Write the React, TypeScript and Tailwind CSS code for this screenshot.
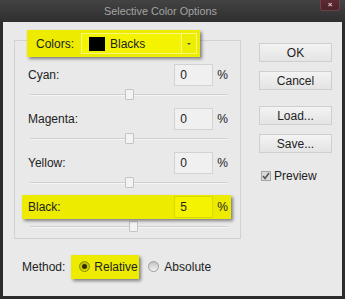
import React from "react";

const F = { fontFamily: '"Liberation Sans", Arial, sans-serif' };

type Row = { label: string; value: number; hi?: boolean };
const rows: Row[] = [
  { label: "Cyan:", value: 0 },
  { label: "Magenta:", value: 0 },
  { label: "Yellow:", value: 0 },
  { label: "Black:", value: 5, hi: true },
];

function Slider({ value }: { value: number }) {
  const w = 197;
  const left = Math.round(((value + 100) / 200) * w) - 4;
  return (
    <div className="relative ml-[8px] w-[197px] h-[20px]">
      <div className="absolute left-0 right-0 top-[7px] h-[1px] bg-[#cfcfcf]" />
      <div className="absolute left-0 right-0 top-[8px] h-[1px] bg-[#f6f6f6]" />
      <div
        className="absolute top-[2px] w-[9px] h-[11px] border border-[#c4c4c4] bg-[#f3f3f3] rounded-[1px]"
        style={{ left }}
      />
    </div>
  );
}

function Btn({ label, className = "" }: { label: string; className?: string }) {
  return (
    <div
      className={
        "w-[73px] h-[19px] flex items-center justify-center border border-[#cfcfcf] bg-gradient-to-b from-[#f3f3f3] to-[#e4e4e4] text-[12px] text-[#222] " +
        className
      }
    >
      {label}
    </div>
  );
}

export default function App() {
  return (
    <div className="w-[345px] h-[299px] bg-[#2b2b2b] flex flex-col" style={F}>
      {/* Title bar */}
      <div className="relative h-[22px] bg-gradient-to-b from-[#434343] to-[#2f2f2f] flex items-center justify-center pr-[24px]">
        <span className="text-[10.8px] text-[#a3a3a3] leading-none pt-[1px]">Selective Color Options</span>
        <div className="absolute top-0 right-[5px] w-[20px] h-[11px] rounded-b-[3px] border border-t-0 border-[#6e4146] bg-gradient-to-b from-[#5c2b31] to-[#4a2227] flex items-center justify-center">
          <span className="text-[8px] leading-none text-[#e9c8cc] font-bold">×</span>
        </div>
      </div>

      {/* Body */}
      <div className="mx-[3px] h-[274px] bg-[#e9e9e9] flex text-[#222] text-[12px]">
        {/* Left column */}
        <div className="w-[238px] pl-[11px] pt-[8px] flex flex-col">
          {/* Colors legend */}
          <div className="relative z-10 ml-[13px] w-[173px] h-[27px] bg-[#eceb00] shadow-[2px_2px_3px_rgba(0,0,0,0.45)] flex items-center pl-[9px]">
            <span className="w-[45px]">Colors:</span>
            <div className="w-[116px] h-[21px] border border-[#f6f67e] bg-[#f4f400] flex items-center">
              <div className="ml-[7px] w-[16px] h-[14px] bg-black" />
              <span className="ml-[5px] flex-1">Blacks</span>
              <div className="w-[15px] h-full border-l border-[#f6f67e] bg-[#eeee00] flex items-center justify-center">
                <div className="w-0 h-0 border-l-[2px] border-r-[2px] border-t-[2px] border-l-transparent border-r-transparent border-t-[#555]" />
              </div>
            </div>
          </div>

          {/* Group box */}
          <div className="mt-[-17px] w-[227px] h-[199px] border border-[#d2d2d2] pt-[22px] pl-[7px]">
            {rows.map((r) => (
              <div key={r.label}>
                <div
                  className={
                    "w-[209px] h-[24px] flex items-center pl-[6px] pr-[3px] " +
                    (r.hi ? "bg-[#eceb00] shadow-[2px_2px_3px_rgba(0,0,0,0.45)] relative z-10" : "")
                  }
                >
                  <span className="flex-1">{r.label}</span>
                  <div
                    className={
                      "w-[39px] h-[22px] border flex items-center pl-[5px] " +
                      (r.hi ? "bg-[#f4f400] border-[#d9d800]" : "bg-[#f0f0f0] border-[#d3d3d3]")
                    }
                  >
                    {r.value}
                  </div>
                  <span className="ml-[4px]">%</span>
                </div>
                <Slider value={r.value} />
              </div>
            ))}
          </div>

          {/* Method */}
          <div className="mt-[16px] ml-[8px] flex items-center h-[24px]">
            <span className="mr-[6px]">Method:</span>
            <div className="h-[24px] w-[68px] bg-[#eceb00] shadow-[2px_2px_3px_rgba(0,0,0,0.45)] flex items-center pl-[8px]">
              <div className="w-[11px] h-[11px] rounded-full border border-[#8d8b00] bg-gradient-to-b from-[#b9b700] to-[#dedc00] flex items-center justify-center mb-[2px]">
                <div className="w-[5px] h-[5px] rounded-full bg-[#2f2f00]" />
              </div>
              <span className="ml-[4px]">Relative</span>
            </div>
            <div className="ml-[9px] w-[11px] h-[11px] rounded-full border border-[#9c9c9c] bg-gradient-to-b from-[#c4c4c4] to-[#f2f2f2] mb-[2px]" />
            <span className="ml-[5px]">Absolute</span>
          </div>
        </div>

        {/* Right column */}
        <div className="ml-[18px] pt-[21px] flex flex-col">
          <Btn label="OK" />
          <Btn label="Cancel" className="mt-[9px]" />
          <Btn label="Load..." className="mt-[16px]" />
          <Btn label="Save..." className="mt-[9px]" />
          <div className="mt-[14px] ml-[2px] flex items-center">
            <div className="w-[10px] h-[10px] border border-[#a5a5a5] bg-[#d9d9d9] flex items-center justify-center">
              <svg width="8" height="8" viewBox="0 0 8 8">
                <path d="M1 4 L3 6.5 L7 1" stroke="#555" strokeWidth="1.6" fill="none" />
              </svg>
            </div>
            <span className="ml-[3px] text-[12px]">Preview</span>
          </div>
        </div>
      </div>
    </div>
  );
}
